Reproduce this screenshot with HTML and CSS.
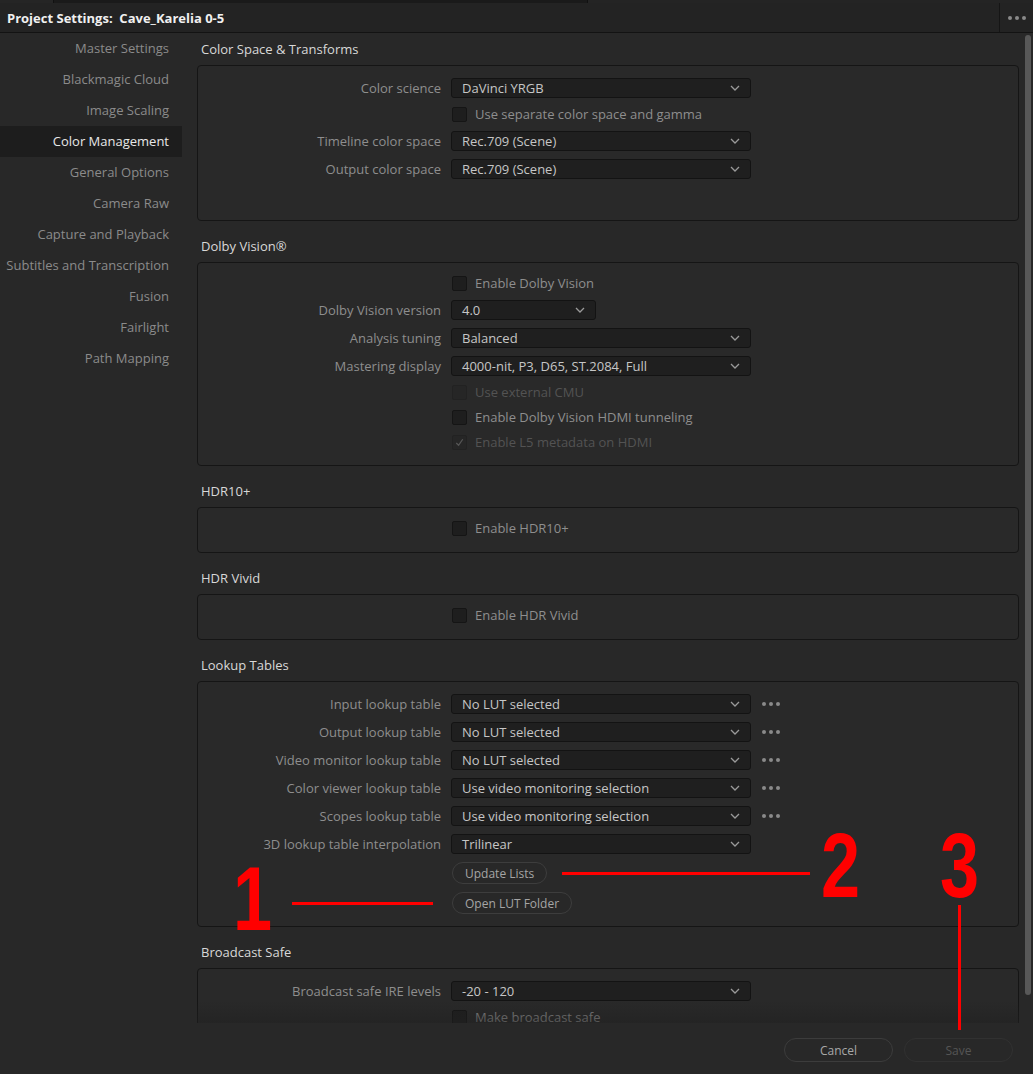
FILE: index.html
```html
<!DOCTYPE html>
<html lang="en">
<head>
<meta charset="utf-8">
<title>Project Settings</title>
<link rel="stylesheet" href="styles.css">
</head>
<body>
<div class="topstrip"><span class="seg s1"></span><span class="seg s2"></span><span class="seg s3"></span></div>
<header class="titlebar">
  <div class="title">Project Settings:&nbsp; Cave_Karelia 0-5</div>
  <div class="more"><i></i><i></i><i></i></div>
</header>
<div class="layout">
  <nav class="sidebar">
    <div class="nav-item">Master Settings</div>
    <div class="nav-item">Blackmagic Cloud</div>
    <div class="nav-item">Image Scaling</div>
    <div class="nav-item active">Color Management</div>
    <div class="nav-item">General Options</div>
    <div class="nav-item">Camera Raw</div>
    <div class="nav-item">Capture and Playback</div>
    <div class="nav-item">Subtitles and Transcription</div>
    <div class="nav-item">Fusion</div>
    <div class="nav-item">Fairlight</div>
    <div class="nav-item">Path Mapping</div>
  </nav>
  <div class="maincol">
    <div class="scrollarea">
      <main class="content">
        <section class="section">
          <h2 class="heading">Color Space &amp; Transforms</h2>
          <div class="box box-cs">
            <div class="row"><span class="label">Color science</span><div class="select"><span>DaVinci YRGB</span><svg class="chev" viewBox="0 0 10 6"><polyline points="1,1 5,5 9,1"/></svg></div></div>
            <div class="row crow"><span class="label"></span><div class="check"><span class="cb"></span><span>Use separate color space and gamma</span></div></div>
            <div class="row"><span class="label">Timeline color space</span><div class="select"><span>Rec.709 (Scene)</span><svg class="chev" viewBox="0 0 10 6"><polyline points="1,1 5,5 9,1"/></svg></div></div>
            <div class="row"><span class="label">Output color space</span><div class="select"><span>Rec.709 (Scene)</span><svg class="chev" viewBox="0 0 10 6"><polyline points="1,1 5,5 9,1"/></svg></div></div>
          </div>
        </section>

        <section class="section">
          <h2 class="heading">Dolby Vision®</h2>
          <div class="box">
            <div class="row crow"><span class="label"></span><div class="check"><span class="cb"></span><span>Enable Dolby Vision</span></div></div>
            <div class="row"><span class="label">Dolby Vision version</span><div class="select narrow"><span>4.0</span><svg class="chev" viewBox="0 0 10 6"><polyline points="1,1 5,5 9,1"/></svg></div></div>
            <div class="row"><span class="label">Analysis tuning</span><div class="select"><span>Balanced</span><svg class="chev" viewBox="0 0 10 6"><polyline points="1,1 5,5 9,1"/></svg></div></div>
            <div class="row"><span class="label">Mastering display</span><div class="select"><span>4000-nit, P3, D65, ST.2084, Full</span><svg class="chev" viewBox="0 0 10 6"><polyline points="1,1 5,5 9,1"/></svg></div></div>
            <div class="row crow"><span class="label"></span><div class="check disabled"><span class="cb"></span><span>Use external CMU</span></div></div>
            <div class="row crow"><span class="label"></span><div class="check"><span class="cb"></span><span>Enable Dolby Vision HDMI tunneling</span></div></div>
            <div class="row crow"><span class="label"></span><div class="check disabled"><span class="cb"><svg viewBox="0 0 14 14"><polyline points="3.5,7.5 6,10 10.5,3.5"/></svg></span><span>Enable L5 metadata on HDMI</span></div></div>
          </div>
        </section>

        <section class="section">
          <h2 class="heading">HDR10+</h2>
          <div class="box box-single">
            <div class="row crow"><span class="label"></span><div class="check"><span class="cb"></span><span>Enable HDR10+</span></div></div>
          </div>
        </section>

        <section class="section">
          <h2 class="heading">HDR Vivid</h2>
          <div class="box box-single">
            <div class="row crow"><span class="label"></span><div class="check"><span class="cb"></span><span>Enable HDR Vivid</span></div></div>
          </div>
        </section>

        <section class="section">
          <h2 class="heading">Lookup Tables</h2>
          <div class="box box-lut">
            <div class="row"><span class="label">Input lookup table</span><div class="select"><span>No LUT selected</span><svg class="chev" viewBox="0 0 10 6"><polyline points="1,1 5,5 9,1"/></svg></div><span class="dots"><i></i><i></i><i></i></span></div>
            <div class="row"><span class="label">Output lookup table</span><div class="select"><span>No LUT selected</span><svg class="chev" viewBox="0 0 10 6"><polyline points="1,1 5,5 9,1"/></svg></div><span class="dots"><i></i><i></i><i></i></span></div>
            <div class="row"><span class="label">Video monitor lookup table</span><div class="select"><span>No LUT selected</span><svg class="chev" viewBox="0 0 10 6"><polyline points="1,1 5,5 9,1"/></svg></div><span class="dots"><i></i><i></i><i></i></span></div>
            <div class="row"><span class="label">Color viewer lookup table</span><div class="select"><span>Use video monitoring selection</span><svg class="chev" viewBox="0 0 10 6"><polyline points="1,1 5,5 9,1"/></svg></div><span class="dots"><i></i><i></i><i></i></span></div>
            <div class="row"><span class="label">Scopes lookup table</span><div class="select"><span>Use video monitoring selection</span><svg class="chev" viewBox="0 0 10 6"><polyline points="1,1 5,5 9,1"/></svg></div><span class="dots"><i></i><i></i><i></i></span></div>
            <div class="row"><span class="label">3D lookup table interpolation</span><div class="select"><span>Trilinear</span><svg class="chev" viewBox="0 0 10 6"><polyline points="1,1 5,5 9,1"/></svg></div></div>
            <div class="row brow"><span class="label"></span><div><button class="pill">Update Lists</button></div></div>
            <div class="row brow"><span class="label"></span><div><button class="pill">Open LUT Folder</button></div></div>
          </div>
        </section>

        <section class="section">
          <h2 class="heading">Broadcast Safe</h2>
          <div class="box">
            <div class="row"><span class="label">Broadcast safe IRE levels</span><div class="select"><span>-20 - 120</span><svg class="chev" viewBox="0 0 10 6"><polyline points="1,1 5,5 9,1"/></svg></div></div>
            <div class="row crow"><span class="label"></span><div class="check"><span class="cb"></span><span>Make broadcast safe</span></div></div>
          </div>
        </section>
        <div class="fade"></div>
      </main>
      <div class="scrolltrack"><div class="thumb"></div></div>
    </div>
    <footer class="footer">
      <button class="fbtn">Cancel</button>
      <button class="fbtn disabled">Save</button>
    </footer>
  </div>
</div>

<div class="annot n1">1</div>
<div class="annot n2">2</div>
<div class="annot n3">3</div>
<div class="aline l1"></div>
<div class="aline l2"></div>
<div class="aline l3"></div>
</body>
</html>
```

FILE: styles.css
```css
* { box-sizing: border-box; }

body {
  margin: 0;
  width: 1033px;
  height: 1074px;
  overflow: hidden;
  position: relative;
  background: #282828;
  font-family: "Open Sans", "Noto Sans", sans-serif;
  font-size: 13px;
  color: #8e8e8e;
}

.topstrip {
  height: 3px;
  background: #161616;
  display: flex;
}
.topstrip .seg { display: block; height: 3px; }
.topstrip .s1 { width: 54px; background: #252525; border-right: 1px solid #111; }
.topstrip .s2 { width: 533px; background: #1a1a1a; }
.topstrip .s3 { flex: 1; background: #242424; border-left: 1px solid #111; }

.titlebar {
  height: 30px;
  display: flex;
  align-items: center;
  background: #232323;
  border-bottom: 1px solid #131313;
}
.title {
  flex: 1;
  padding-left: 7px;
  font-weight: 700;
  font-size: 13px;
  color: #f0f0f0;
}
.more {
  width: 34px;
  height: 29px;
  border-left: 1px solid #151515;
  display: flex;
  align-items: center;
  justify-content: center;
  gap: 3px;
}
.more i, .dots i {
  display: block;
  width: 4px;
  height: 4px;
  border-radius: 50%;
  background: #8a8a8a;
}

.layout {
  display: flex;
  height: 1041px;
}

.sidebar {
  width: 182px;
  flex: none;
}
.nav-item {
  height: 31px;
  line-height: 31px;
  text-align: right;
  padding-right: 13px;
  color: #8b8b8b;
  white-space: nowrap;
}
.nav-item.active {
  background: #1d1d1d;
  color: #e8e8e8;
}

.maincol {
  flex: 1;
  display: flex;
  flex-direction: column;
}
.scrollarea {
  height: 990px;
  display: flex;
  overflow: hidden;
}
.content {
  width: 837px;
  padding-left: 15px;
  position: relative;
  overflow: hidden;
}
.fade {
  position: absolute;
  left: 15px;
  right: 0;
  bottom: 0;
  height: 22px;
  background: linear-gradient(to bottom, rgba(40,40,40,0), rgba(32,32,32,0.55));
}

.section { padding-top: 7px; }
.section + .section { padding-top: 16px; }

.heading {
  margin: 0 0 7px;
  padding-left: 4px;
  font-size: 13px;
  font-weight: 400;
  line-height: 18px;
  color: #d8d8d8;
}

.box {
  border: 1px solid #151515;
  border-radius: 4px;
  background: #292929;
  padding: 11px 0 14px;
  display: flex;
  flex-direction: column;
  gap: 7px;
}
.box-cs { padding-bottom: 41px; }
.box-single { padding-bottom: 15px; }
.box-lut { padding-bottom: 12px; }

.row {
  display: grid;
  grid-template-columns: 243px 300px auto;
  column-gap: 10px;
  align-items: center;
  height: 21px;
}
.crow { height: 18px; }
.brow { height: 22px; margin-top: 1px; }

.label {
  text-align: right;
  color: #8e8e8e;
  white-space: nowrap;
}

.select {
  height: 20px;
  width: 300px;
  background: #1f1f1f;
  border: 1px solid #131313;
  border-radius: 3px;
  display: flex;
  align-items: center;
  justify-content: space-between;
  padding: 0 10px 0 10px;
  color: #c6c6c6;
}
.select.narrow { width: 145px; }
.chev {
  width: 10px;
  height: 6px;
  fill: none;
  stroke: #9a9a9a;
  stroke-width: 1.3;
}

.dots {
  display: flex;
  gap: 3px;
  margin-left: 1px;
}

.check {
  display: flex;
  align-items: center;
  gap: 8px;
  padding-left: 1px;
  color: #8e8e8e;
}
.cb {
  width: 15px;
  height: 15px;
  background: #1e1e1e;
  border: 1px solid #151515;
  border-radius: 2px;
  display: flex;
}
.cb svg {
  width: 13px;
  height: 13px;
  fill: none;
  stroke: #555;
  stroke-width: 1.4;
}
.check.disabled { color: #535353; }
.check.disabled .cb { background: #262626; border-color: #222; }

.pill {
  font: inherit;
  font-size: 12px;
  height: 22px;
  padding: 0 12px;
  border-radius: 11px;
  border: 1px solid #3d3d3d;
  background: #282828;
  color: #a5a5a5;
  margin-left: 1px;
}

.scrolltrack {
  width: 14px;
  flex: none;
  padding: 2px 2px 0 6px;
}
.thumb {
  height: 960px;
  background: #585858;
  border-radius: 3px;
}

.footer {
  height: 51px;
  display: flex;
  justify-content: flex-end;
  align-items: flex-start;
  gap: 11px;
  padding: 15px 20px 0 0;
}
.fbtn {
  font: inherit;
  font-size: 12px;
  width: 109px;
  height: 24px;
  border-radius: 12px;
  border: 1px solid #3c3c3c;
  background: #282828;
  color: #a8a8a8;
}
.fbtn.disabled {
  border-color: #313131;
  color: #555;
}

.annot {
  position: absolute;
  font-family: "Liberation Sans", Arial, sans-serif;
  font-weight: 700;
  font-size: 90px;
  line-height: 66px;
  height: 66px;
  color: #ff0000;
  transform: scaleX(0.78);
  transform-origin: left top;
}
.n1 { left: 233px; top: 866px; }
.n2 { left: 821px; top: 833px; }
.n3 { left: 940px; top: 833px; }

.aline { position: absolute; background: #ff0000; }
.l1 { left: 292px; top: 902px; width: 141px; height: 3px; }
.l2 { left: 562px; top: 872px; width: 248px; height: 3px; }
.l3 { left: 958px; top: 905px; width: 3px; height: 125px; }
```
